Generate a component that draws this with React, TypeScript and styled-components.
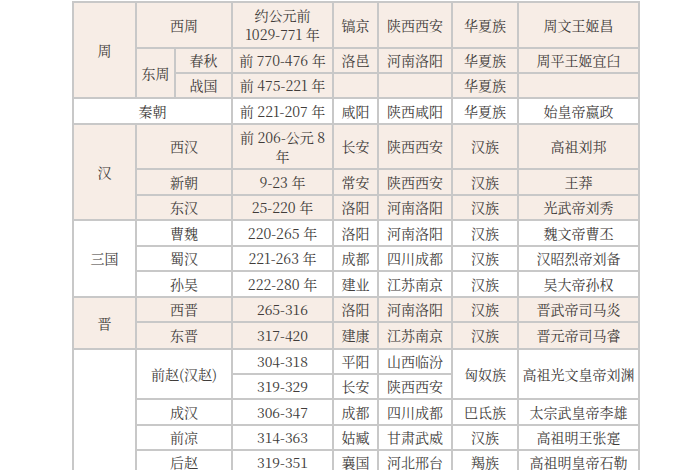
import React from "react";
import styled, { createGlobalStyle } from "styled-components";

const GlobalStyle = createGlobalStyle`
  html, body {
    margin: 0;
    padding: 0;
    background: #ffffff;
    overflow: hidden;
  }
  body {
    height: 470px;
  }
`;

const Page = styled.div`
  padding: 1px 0 0 72px;
  width: 700px;
  height: 470px;
  box-sizing: border-box;
  overflow: hidden;
`;

const Table = styled.table`
  border-collapse: collapse;
  table-layout: fixed;
  width: 567px;
  border: 2px solid #c8c8c8;
  font-family: "Noto Serif CJK SC", "Liberation Serif", "Noto Sans CJK SC", serif;
  font-size: 14px;
  color: #403b39;
`;

const Row = styled.tr<{ $peach?: boolean; $h: number }>`
  height: ${(p) => p.$h}px;
  background: ${(p) => (p.$peach ? "#f7ede6" : "#ffffff")};
`;

const Cell = styled.td`
  border: 2px solid #c8c8c8;
  padding: 0 2px;
  text-align: center;
  vertical-align: middle;
  line-height: 19px;
  white-space: nowrap;
`;

const widths = [63, 39, 57, 101, 45, 74, 66, 121];

const App = () => {
  return (
    <>
      <GlobalStyle />
      <Page>
        <Table>
          <colgroup>
            {widths.map((w, i) => (
              <col key={i} style={{ width: w }} />
            ))}
          </colgroup>
          <tbody>
            <Row $peach $h={46}>
              <Cell rowSpan={3}>周</Cell>
              <Cell colSpan={2}>西周</Cell>
              <Cell>
                约公元前
                <br />
                1029-771 年
              </Cell>
              <Cell>镐京</Cell>
              <Cell>陕西西安</Cell>
              <Cell>华夏族</Cell>
              <Cell>周文王姬昌</Cell>
            </Row>
            <Row $peach $h={25}>
              <Cell rowSpan={2}>东周</Cell>
              <Cell>春秋</Cell>
              <Cell>前 770-476 年</Cell>
              <Cell>洛邑</Cell>
              <Cell>河南洛阳</Cell>
              <Cell>华夏族</Cell>
              <Cell>周平王姬宜臼</Cell>
            </Row>
            <Row $peach $h={25}>
              <Cell>战国</Cell>
              <Cell>前 475-221 年</Cell>
              <Cell></Cell>
              <Cell></Cell>
              <Cell>华夏族</Cell>
              <Cell></Cell>
            </Row>
            <Row $h={26}>
              <Cell colSpan={3}>秦朝</Cell>
              <Cell>前 221-207 年</Cell>
              <Cell>咸阳</Cell>
              <Cell>陕西咸阳</Cell>
              <Cell>华夏族</Cell>
              <Cell>始皇帝嬴政</Cell>
            </Row>
            <Row $peach $h={45}>
              <Cell rowSpan={3}>汉</Cell>
              <Cell colSpan={2}>西汉</Cell>
              <Cell>
                前 206-公元 8
                <br />年
              </Cell>
              <Cell>长安</Cell>
              <Cell>陕西西安</Cell>
              <Cell>汉族</Cell>
              <Cell>高祖刘邦</Cell>
            </Row>
            <Row $peach $h={26}>
              <Cell colSpan={2}>新朝</Cell>
              <Cell>9-23 年</Cell>
              <Cell>常安</Cell>
              <Cell>陕西西安</Cell>
              <Cell>汉族</Cell>
              <Cell>王莽</Cell>
            </Row>
            <Row $peach $h={25}>
              <Cell colSpan={2}>东汉</Cell>
              <Cell>25-220 年</Cell>
              <Cell>洛阳</Cell>
              <Cell>河南洛阳</Cell>
              <Cell>汉族</Cell>
              <Cell>光武帝刘秀</Cell>
            </Row>
            <Row $h={26}>
              <Cell rowSpan={3}>三国</Cell>
              <Cell colSpan={2}>曹魏</Cell>
              <Cell>220-265 年</Cell>
              <Cell>洛阳</Cell>
              <Cell>河南洛阳</Cell>
              <Cell>汉族</Cell>
              <Cell>魏文帝曹丕</Cell>
            </Row>
            <Row $h={25}>
              <Cell colSpan={2}>蜀汉</Cell>
              <Cell>221-263 年</Cell>
              <Cell>成都</Cell>
              <Cell>四川成都</Cell>
              <Cell>汉族</Cell>
              <Cell>汉昭烈帝刘备</Cell>
            </Row>
            <Row $h={26}>
              <Cell colSpan={2}>孙吴</Cell>
              <Cell>222-280 年</Cell>
              <Cell>建业</Cell>
              <Cell>江苏南京</Cell>
              <Cell>汉族</Cell>
              <Cell>吴大帝孙权</Cell>
            </Row>
            <Row $peach $h={25}>
              <Cell rowSpan={2}>晋</Cell>
              <Cell colSpan={2}>西晋</Cell>
              <Cell>265-316</Cell>
              <Cell>洛阳</Cell>
              <Cell>河南洛阳</Cell>
              <Cell>汉族</Cell>
              <Cell>晋武帝司马炎</Cell>
            </Row>
            <Row $peach $h={27}>
              <Cell colSpan={2}>东晋</Cell>
              <Cell>317-420</Cell>
              <Cell>建康</Cell>
              <Cell>江苏南京</Cell>
              <Cell>汉族</Cell>
              <Cell>晋元帝司马睿</Cell>
            </Row>
            <Row $h={25}>
              <Cell rowSpan={5}></Cell>
              <Cell colSpan={2} rowSpan={2}>
                前赵(汉赵)
              </Cell>
              <Cell>304-318</Cell>
              <Cell>平阳</Cell>
              <Cell>山西临汾</Cell>
              <Cell rowSpan={2}>匈奴族</Cell>
              <Cell rowSpan={2}>高祖光文皇帝刘渊</Cell>
            </Row>
            <Row $h={25}>
              <Cell>319-329</Cell>
              <Cell>长安</Cell>
              <Cell>陕西西安</Cell>
            </Row>
            <Row $h={26}>
              <Cell colSpan={2}>成汉</Cell>
              <Cell>306-347</Cell>
              <Cell>成都</Cell>
              <Cell>四川成都</Cell>
              <Cell>巴氐族</Cell>
              <Cell>太宗武皇帝李雄</Cell>
            </Row>
            <Row $h={25}>
              <Cell colSpan={2}>前凉</Cell>
              <Cell>314-363</Cell>
              <Cell>姑臧</Cell>
              <Cell>甘肃武威</Cell>
              <Cell>汉族</Cell>
              <Cell>高祖明王张寔</Cell>
            </Row>
            <Row $h={25}>
              <Cell colSpan={2}>后赵</Cell>
              <Cell>319-351</Cell>
              <Cell>襄国</Cell>
              <Cell>河北邢台</Cell>
              <Cell>羯族</Cell>
              <Cell>高祖明皇帝石勒</Cell>
            </Row>
          </tbody>
        </Table>
      </Page>
    </>
  );
};

export default App;
